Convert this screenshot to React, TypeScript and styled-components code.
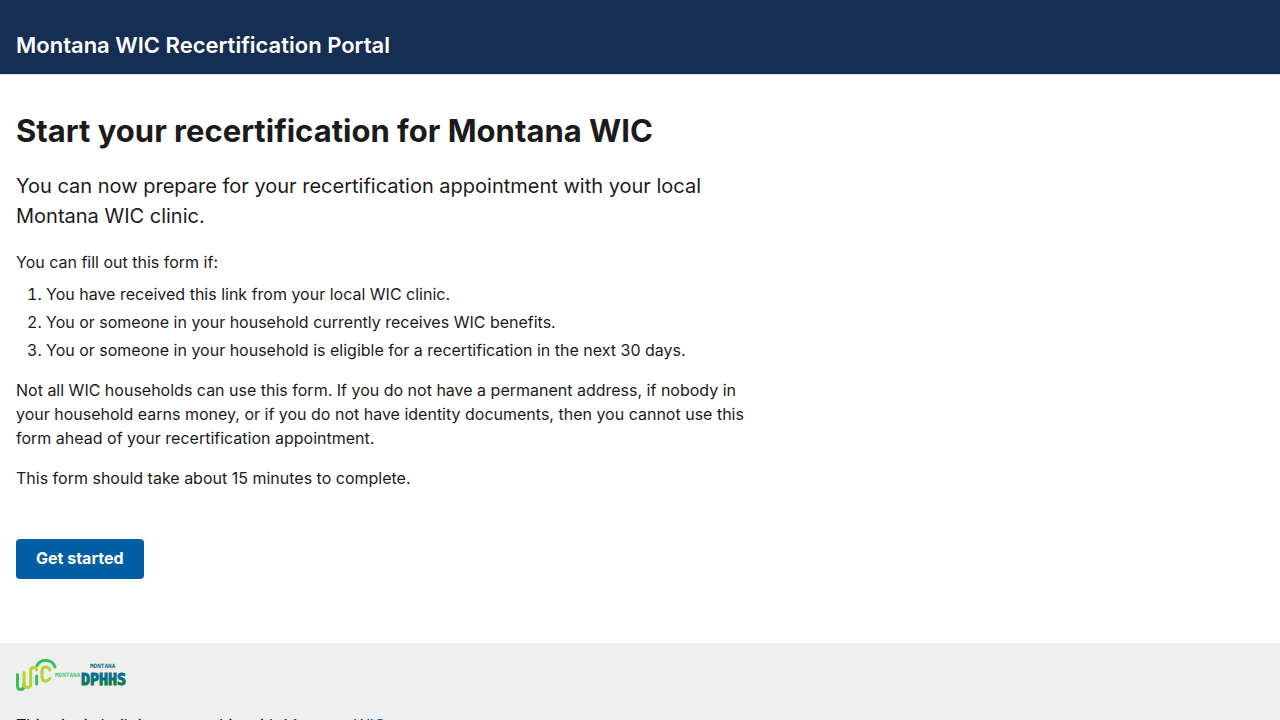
import React from "react";
import styled, { createGlobalStyle } from "styled-components";

const GlobalStyle = createGlobalStyle`
  *, *::before, *::after { box-sizing: border-box; }
  body {
    margin: 0;
    background: #ffffff;
    color: #1b1b1b;
    font-family: Inter, "Liberation Sans", sans-serif;
    font-size: 16px;
    line-height: 24px;
  }
`;

const Header = styled.header`
  padding: 32px 16px 16px;
  background: #162e51;
  border-bottom: 1px solid #dfe1e2;
`;

const SiteTitle = styled.div`
  color: #ffffff;
  font-size: 22px;
  font-weight: 600;
  line-height: 26px;
`;

const Main = styled.main`
  max-width: 760px;
  padding: 36px 16px 64px;
`;

const Heading = styled.h1`
  margin: 0 0 20px;
  font-size: 31px;
  font-weight: 700;
  line-height: 40px;
`;

const Intro = styled.p`
  margin: 0 0 19px;
  font-size: 20px;
  line-height: 30px;
`;

const Paragraph = styled.p`
  margin: 16px 0 0;
`;

const Criteria = styled.ol`
  display: flex;
  flex-direction: column;
  gap: 4px;
  margin: 8px 0 0;
  padding-left: 30px;
`;

const StartButton = styled.button`
  height: 40px;
  margin-top: 49px;
  padding: 0 20px 2px;
  border: 0;
  border-radius: 4px;
  background: #005ea2;
  color: #ffffff;
  font: inherit;
  font-weight: 700;
  cursor: pointer;
`;

const Footer = styled.footer`
  padding: 16px;
  background: #efefef;
`;

const Logos = styled.div`
  display: flex;
  height: 32px;
  margin-bottom: 22px;
`;

const LogoText = styled.text`
  font-family: "DejaVu Sans Mono", monospace;
  font-weight: 700;
`;

const FooterText = styled.p`
  margin: 0;
`;

const FooterLink = styled.a`
  color: #005ea2;
`;

function PartnerLogos() {
  return (
    <svg width="112" height="32" viewBox="0 0 112 32" role="img" aria-label="Montana WIC and Montana DPHHS">
      <defs>
        <linearGradient id="dphhs" x1="0" y1="0" x2="0" y2="1">
          <stop offset="0.4" stopColor="#08708a" />
          <stop offset="0.7" stopColor="#067c48" />
        </linearGradient>
      </defs>
      <g fill="none" strokeWidth="3" strokeLinecap="round">
        <path d="M1.500 15.500V27Q1.500 30.500 4.500 30.500Q8 30.500 8 27V24" stroke="#35bf5c" />
        <path d="M8 13.500V25Q8 28.500 11.300 28.500Q14.700 28.500 14.700 25V12Q14.700 8.500 17.700 8.500Q20.200 8.500 20.700 11" stroke="#b5d433" />
        <path d="M20.700 17V25" stroke="#35bf5c" />
        <path d="M34 11Q32 8 29.500 8Q26 8 26 12V18Q26 22 29.500 22Q32 22 34 19.500" stroke="#b5d433" />
        <path d="M21 6.500Q23.500 1.500 29.500 1.500Q37 1.500 39 8" stroke="#35bf5c" />
      </g>
      <LogoText x="39" y="18" fontSize="6" fill="#4cc772">MONTANA</LogoText>
      <LogoText x="74" y="9" fontSize="6" fill="#08708a">MONTANA</LogoText>
      <LogoText x="65" y="26" fontSize="15" fill="url(#dphhs)" stroke="url(#dphhs)">DPHHS</LogoText>
    </svg>
  );
}

export default function App() {
  return (
    <>
      <GlobalStyle />
      <Header>
        <SiteTitle>Montana WIC Recertification Portal</SiteTitle>
      </Header>
      <Main>
        <Heading>Start your recertification for Montana WIC</Heading>
        <Intro>
          You can now prepare for your recertification appointment with your local Montana WIC clinic.
        </Intro>
        <Paragraph>You can fill out this form if:</Paragraph>
        <Criteria>
          <li>You have received this link from your local WIC clinic.</li>
          <li>You or someone in your household currently receives WIC benefits.</li>
          <li>You or someone in your household is eligible for a recertification in the next 30 days.</li>
        </Criteria>
        <Paragraph>
          Not all WIC households can use this form. If you do not have a permanent address, if nobody in
          your household earns money, or if you do not have identity documents, then you cannot use this
          form ahead of your recertification appointment.
        </Paragraph>
        <Paragraph>This form should take about 15 minutes to complete.</Paragraph>
        <StartButton type="button">Get started</StartButton>
      </Main>
      <Footer>
        <Logos>
          <PartnerLogos />
        </Logos>
        <FooterText>
          This site is built in partnership with <FooterLink href="#wic">Montana WIC</FooterLink>.
        </FooterText>
      </Footer>
    </>
  );
}
